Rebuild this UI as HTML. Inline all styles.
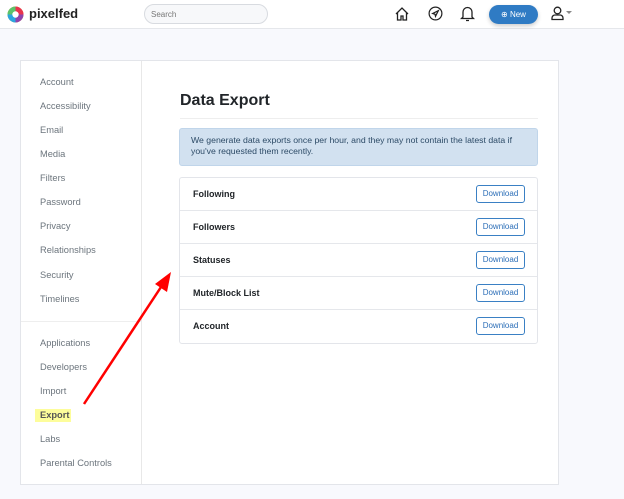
<!DOCTYPE html>
<html><head><meta charset="utf-8"><style>
*{box-sizing:border-box;margin:0;padding:0}
body{width:624px;height:499px;overflow:hidden;background:#f8f9fd;font-family:"Liberation Sans",sans-serif;position:relative}
.nav{position:absolute;left:0;top:0;width:624px;height:29px;background:#fff;border-bottom:1px solid #e5e7eb}
.abs{position:absolute}
.card{position:absolute;left:20px;top:60px;width:539px;height:425px;background:#fff;border:1px solid #e3e5ea}
.side{position:absolute;left:0;top:0;width:121px;height:423px;border-right:1px solid #e8e8e8}
.side div{position:absolute;left:19px;font-size:9.3px;color:#6c757d}
.row{position:absolute;left:0;width:358px;height:33px;border-top:1px solid #e5e7eb}
.row span{position:absolute;left:13px;top:11px;font-size:9px;font-weight:bold;color:#212529}
.row b{position:absolute;left:296px;top:7px;width:49px;height:18px;border:1px solid #3a80c4;border-radius:3px;color:#2d6fb8;font-size:8px;font-weight:normal;text-align:center;line-height:16px}
</style></head><body>
<div class="nav">
 <svg class="abs" style="left:7px;top:6px" width="17" height="17" viewBox="0 0 17 17">
  <circle cx="8.5" cy="8.5" r="8" fill="#f5a623"/>
  <path d="M8.5 .5A8 8 0 0 1 16.5 8.5H8.5Z" fill="#e8344e"/>
  <path d="M16.5 8.5A8 8 0 0 1 8.5 16.5V8.5Z" fill="#8e44ad"/>
  <path d="M8.5 16.5A8 8 0 0 1 .5 8.5H8.5Z" fill="#2aa5e0"/>
  <path d="M.5 8.5A8 8 0 0 1 8.5 .5V8.5Z" fill="#5cc36b"/>
  <circle cx="8.5" cy="8.5" r="3.2" fill="#fff"/>
 </svg>
 <div class="abs" style="left:29px;top:6px;font-size:13px;font-weight:bold;color:#222">pixelfed</div>
 <div class="abs" style="left:144px;top:4px;width:124px;height:20px;border:1px solid #d8dbe0;border-radius:10px;background:#f7f8fa;font-size:8px;color:#777;padding:5px 6px">Search</div>
 <svg class="abs" style="left:394px;top:6px" width="16" height="16" viewBox="0 0 16 16" fill="none" stroke="#222" stroke-width="1.3"><path d="M2 8 8 2l6 6M3.5 6.5V14h3.5v-4h2v4h3.5V6.5"/></svg>
 <svg class="abs" style="left:428px;top:6px" width="15" height="15" viewBox="0 0 16 16" fill="none" stroke="#222" stroke-width="1.3"><circle cx="8" cy="8" r="6.8"/><path d="M11 5 5 8l2.5.8L8 11z"/></svg>
 <svg class="abs" style="left:460px;top:5px" width="15" height="17" viewBox="0 0 15 17" fill="none" stroke="#222" stroke-width="1.3"><path d="M3 12V7a4.5 4.5 0 0 1 9 0v5l1.5 1.5h-12zM6 15.5h3"/></svg>
 <div class="abs" style="left:489px;top:5px;width:49px;height:19px;border-radius:10px;background:#2f7bc4;color:#fff;font-size:8px;line-height:19px;text-align:center;box-shadow:0 2px 4px rgba(0,0,0,.2)">⊕ New</div>
 <svg class="abs" style="left:551px;top:6px" width="13" height="15" viewBox="0 0 13 15" fill="none" stroke="#222" stroke-width="1.3"><circle cx="6.5" cy="4.5" r="3.3"/><path d="M1 13.5v-1.5a3 3 0 0 1 3-3h5a3 3 0 0 1 3 3v1.5z"/></svg>
 <div class="abs" style="left:566px;top:11px;border:3px solid transparent;border-top:3px solid #888"></div>
</div>
<div class="card">
 <div class="side">
  <div style="top:16px">Account</div><div style="top:40px">Accessibility</div><div style="top:64px">Email</div><div style="top:88px">Media</div><div style="top:112px">Filters</div><div style="top:136px">Password</div><div style="top:160px">Privacy</div><div style="top:184px">Relationships</div><div style="top:209px">Security</div><div style="top:233px">Timelines</div>
  <div style="left:0;top:260px;width:120px;height:1px;background:#eee"></div>
  <div style="top:277px">Applications</div><div style="top:301px">Developers</div><div style="top:325px">Import</div>
  <div style="left:14px;top:348px;width:36px;height:13px;background:#fdfd9b"></div>
  <div style="top:349px;font-weight:bold;color:#555">Export</div>
  <div style="top:373px">Labs</div><div style="top:397px">Parental Controls</div>
 </div>
 <div class="abs" style="left:159px;top:31px;font-size:16px;font-weight:bold;color:#212529">Data Export</div>
 <div class="abs" style="left:159px;top:57px;width:358px;height:1px;background:#eee"></div>
 <div class="abs" style="left:158px;top:67px;width:359px;height:38px;background:#d2e1f0;border:1px solid #c0d5ea;border-radius:3px;font-size:8.7px;color:#2c4a66;padding:6px 11px;line-height:11px">We generate data exports once per hour, and they may not contain the latest data if you've requested them recently.</div>
 <div class="abs" style="left:158px;top:116px;width:359px;height:167px;border:1px solid #e3e5ea;border-radius:3px;overflow:hidden">
  <div class="row" style="top:-1px"><span>Following</span><b>Download</b></div>
  <div class="row" style="top:32px"><span>Followers</span><b>Download</b></div>
  <div class="row" style="top:65px"><span>Statuses</span><b>Download</b></div>
  <div class="row" style="top:98px"><span>Mute/Block List</span><b>Download</b></div>
  <div class="row" style="top:131px"><span>Account</span><b>Download</b></div>
 </div>
</div>
<svg class="abs" style="left:0;top:0" width="624" height="499"><line x1="84" y1="404" x2="163" y2="284" stroke="#f00" stroke-width="2.5"/><path d="M171 272 167 292 155 284z" fill="#f00"/></svg>
</body></html>
